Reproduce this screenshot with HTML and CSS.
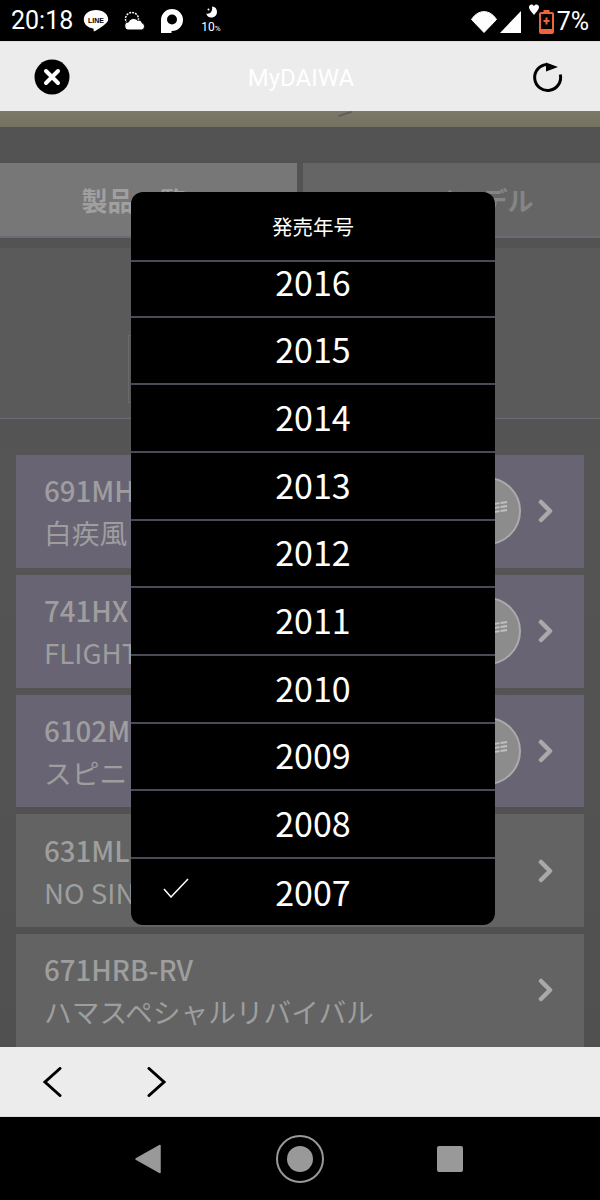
FILE: index.html
```html
<!DOCTYPE html>
<html lang="ja">
<head>
  <meta charset="UTF-8">
  <meta name="viewport" content="width=device-width, initial-scale=1.0">
  <title>MyDAIWA</title>
  <link rel="stylesheet" href="styles.css">
</head>
<body>
  <div class="screen">

    <!-- status bar -->
    <div class="status">
      <span class="clock">20:18</span>
      <svg class="st-line" width="26" height="24" viewBox="0 0 26 24">
        <path d="M13 1C6 1 .8 5 .8 10.400c0 4.800 4 8.200 9.200 9 .8.200.8 .8 .6 2-.1 1 .6 1.200 1.400.7 2.800-1.600 8-4.600 10.400-7.300C24.300 13 25.200 11.800 25.200 10.400 25.200 5 20 1 13 1z" fill="#fff"/>
        <text x="13" y="13.500" class="line-text">LINE</text>
      </svg>
      <svg class="st-weather" width="24" height="22" viewBox="0 0 24 22">
        <circle cx="9" cy="9" r="6.500" fill="none" stroke="#fff" stroke-width="1.500" stroke-dasharray="2 1"/>
        <path d="M6 20a4 4 0 0 1-.5-8c1-3.500 6.500-5 9-1.500 1-.6 4-.5 4.500 2.300A3.800 3.800 0 0 1 19 20z" fill="#fff" stroke="#000"/>
      </svg>
      <svg class="st-p" width="22" height="24" viewBox="0 0 22 24">
        <path fill-rule="evenodd" d="M0 24V11A11 11 0 1 1 11 22H10.500V24zM11 5.500a5 5 0 1 0 0 10 5 5 0 0 0 0-10z" fill="#fff"/>
      </svg>
      <div class="st-moon">
        <svg width="13" height="12" viewBox="0 0 13 12">
          <path d="M7 .5a5.500 5.500 0 1 1-5.800 7c3.300 1.200 6.800-1.500 5.800-7z" fill="#fff"/>
          <circle cx="3.500" cy="3.500" r="1" fill="#fff"/>
        </svg>
        <span>10<small>%</small></span>
      </div>
      <div class="st-right">
        <svg width="26" height="22" viewBox="0 0 26 22"><path d="M.5 8.500C7-2 19-2 25.500 8.500L13 21.500z" fill="#fff" stroke="#fff" stroke-linejoin="round"/></svg>
        <svg class="st-signal" width="21" height="22" viewBox="0 0 21 22"><path d="M21 0v22H0z" fill="#fff"/></svg>
        <svg class="st-heart" width="10" height="11" viewBox="0 0 10 11"><path d="M5 11C3 8 0 6 0 3c0-3 4-3.500 5-1 1-2.500 5-2 5 1 0 3-3 5-5 8z" fill="#fff"/></svg>
        <svg class="st-batt" width="15" height="24" viewBox="0 0 15 24">
          <rect x="4.500" y="0" width="6" height="3" fill="#f0643c"/>
          <rect x="1" y="3" width="13" height="20" rx="1" fill="none" stroke="#f0643c" stroke-width="2"/>
          <path d="M7.500 7.500v7M4.500 11h6" stroke="#f0643c" stroke-width="2"/>
          <rect x="2" y="19" width="11" height="3" fill="#f0643c"/>
        </svg>
        <span class="pct">7%</span>
      </div>
    </div>

    <!-- browser header -->
    <header class="topbar">
      <svg width="36" height="36" viewBox="0 0 36 36">
        <circle cx="18" cy="18" r="17.500" fill="#000"/>
        <path d="M12 12l12 12M24 12L12 24" stroke="#fff" stroke-width="4" stroke-linecap="round"/>
      </svg>
      <span class="topbar-title">MyDAIWA</span>
      <svg width="32" height="34" viewBox="0 0 32 34">
        <path d="M15 4.500A13 13 0 1 0 28.300 14.500" fill="none" stroke="#000" stroke-width="3"/>
        <path d="M14 2.500l12 4.500-12 4.500z" fill="#000"/>
      </svg>
    </header>

    <!-- page under the dialog -->
    <main class="page">
      <div class="hero"><i></i></div>
      <div class="tabs">
        <div class="tab tab-on">製品一覧</div>
        <div class="tab tab-off">マイモデル</div>
      </div>
      <section class="filter">
        <div class="filter-box"></div>
      </section>
      <ul class="cards">
        <li class="card card-own">
          <div class="card-text"><b>691MH</b><span>白疾風</span></div>
          <svg class="medal" width="68" height="68" viewBox="0 0 68 68">
            <circle cx="34" cy="34" r="33" />
            <path d="M8 32l46-7M8 36l46-7M8 40l46-7" />
          </svg>
          <svg class="chev" width="16" height="24" viewBox="0 0 16 24"><path d="M3 3l9 9-9 9" /></svg>
        </li>
        <li class="card card-own">
          <div class="card-text"><b>741HX</b><span>FLIGHT</span></div>
          <svg class="medal" width="68" height="68" viewBox="0 0 68 68">
            <circle cx="34" cy="34" r="33" />
            <path d="M8 32l46-7M8 36l46-7M8 40l46-7" />
          </svg>
          <svg class="chev" width="16" height="24" viewBox="0 0 16 24"><path d="M3 3l9 9-9 9" /></svg>
        </li>
        <li class="card card-own">
          <div class="card-text"><b>6102M</b><span>スピニ</span></div>
          <svg class="medal" width="68" height="68" viewBox="0 0 68 68">
            <circle cx="34" cy="34" r="33" />
            <path d="M8 32l46-7M8 36l46-7M8 40l46-7" />
          </svg>
          <svg class="chev" width="16" height="24" viewBox="0 0 16 24"><path d="M3 3l9 9-9 9" /></svg>
        </li>
        <li class="card">
          <div class="card-text"><b>631ML</b><span>NO SIN</span></div>
          <svg class="chev" width="16" height="24" viewBox="0 0 16 24"><path d="M3 3l9 9-9 9" /></svg>
        </li>
        <li class="card">
          <div class="card-text"><b>671HRB-RV</b><span>ハマスペシャルリバイバル</span></div>
          <svg class="chev" width="16" height="24" viewBox="0 0 16 24"><path d="M3 3l9 9-9 9" /></svg>
        </li>
      </ul>
    </main>

    <!-- browser back / forward -->
    <div class="bottombar">
      <svg width="22" height="30" viewBox="0 0 22 30"><path d="M18 1.500L3 15l15 13.500"/></svg>
      <svg width="22" height="30" viewBox="0 0 22 30"><path d="M3 1.500L18 15 3 28.500"/></svg>
    </div>

    <!-- android nav -->
    <nav class="sysnav">
      <svg width="26" height="30" viewBox="0 0 26 30"><path d="M25 1.500v27L1 15z" fill="#999" stroke="#999" stroke-linejoin="round" stroke-width="1.500"/></svg>
      <svg class="nav-home" width="50" height="50" viewBox="0 0 50 50">
        <circle cx="25" cy="25" r="23" fill="none" stroke="#999" stroke-width="2"/>
        <circle cx="25" cy="25" r="13" fill="#999"/>
      </svg>
      <div class="nav-square"></div>
    </nav>

    <!-- year picker -->
    <div class="picker">
      <div class="picker-head">発売年号</div>
      <div class="picker-row picker-cut">2016</div>
      <div class="picker-row">2015</div>
      <div class="picker-row">2014</div>
      <div class="picker-row">2013</div>
      <div class="picker-row">2012</div>
      <div class="picker-row">2011</div>
      <div class="picker-row">2010</div>
      <div class="picker-row">2009</div>
      <div class="picker-row">2008</div>
      <div class="picker-row picker-sel">
        <svg class="tick" width="26" height="20" viewBox="0 0 26 20"><path d="M1 11l7 8L25 1"/></svg>
        2007
      </div>
    </div>

  </div>
</body>
</html>
```

FILE: styles.css
```css
* {
  box-sizing: border-box;
}
body {
  margin: 0;
  background: #000;
  font-family: "Noto Sans CJK JP", "Noto Sans", sans-serif;
}
.screen {
  position: relative;
  width: 600px;
  height: 1200px;
  display: flex;
  flex-direction: column;
  overflow: hidden;
}

/* status bar */
.status {
  height: 42px;
  flex: none;
  background: #000;
  color: #fff;
  display: flex;
  align-items: center;
  padding: 0 11px;
  border-bottom: 1px solid #ddd;
  font-family: Roboto, sans-serif;
}
.clock {
  font-size: 25px;
  width: 72px;
}
.line-text {
  font: bold 7px "Liberation Sans", sans-serif;
  text-anchor: middle;
  fill: #000;
}
.st-weather {
  margin-left: 14px;
}
.st-p {
  margin-left: 14px;
  margin-top: 1px;
}
.st-moon {
  margin-left: 17px;
  width: 22px;
  display: flex;
  flex-direction: column;
  align-items: center;
  font-size: 12px;
  line-height: 12px;
}
.st-moon svg {
  margin-bottom: 3px;
}
.st-moon small {
  font-size: 8px;
}
.st-right {
  margin-left: auto;
  display: flex;
  align-items: center;
  position: relative;
  top: 1px;
}
.st-signal {
  margin-left: 3px;
}
.st-heart {
  margin: -24px 0 0 8px;
}
.pct {
  font-size: 25px;
  margin-left: 3px;
}

/* browser bars */
.topbar {
  height: 69px;
  flex: none;
  background: #ececec;
  display: flex;
  align-items: center;
  justify-content: space-between;
  padding: 0 36px 0 34px;
}
.topbar-title {
  color: #fff;
  font-family: Roboto, sans-serif;
  font-size: 24px;
  padding-top: 2px;
}
.bottombar {
  height: 70px;
  flex: none;
  background: #ececec;
  border-bottom: 1px solid #ddd;
  display: flex;
  align-items: center;
  gap: 82px;
  padding-left: 42px;
}
.bottombar path {
  fill: none;
  stroke: #000;
  stroke-width: 3;
  stroke-linecap: round;
}
.sysnav {
  height: 83px;
  flex: none;
  background: #000;
  display: flex;
  align-items: center;
  padding-left: 135px;
}
.nav-home {
  margin-left: 114px;
}
.nav-square {
  width: 26px;
  height: 26px;
  margin-left: 112px;
  border-radius: 2px;
  background: #999;
}

/* dimmed page */
.page {
  flex: 1;
  min-height: 0;
  background: linear-gradient(#525252, #555 40%, #505050);
  overflow: hidden;
}
.hero {
  height: 16px;
  background: linear-gradient(#7c7969, #757263);
}
.hero i {
  display: block;
  width: 14px;
  height: 2px;
  margin-left: 338px;
  background: #5e5e60;
  transform: translateY(2px) rotate(-18deg);
}
.tabs {
  display: flex;
  justify-content: space-between;
  margin-top: 36px;
  height: 75px;
}
.tab {
  width: 297px;
  display: flex;
  align-items: center;
  justify-content: center;
  font-size: 26px;
  font-weight: bold;
  border-bottom: 2px solid #6b6b73;
}
.tab-on {
  background: #777;
  color: #a0a0a0;
  padding-right: 30px;
}
.tab-off {
  background: #656565;
  color: #858585;
  padding-left: 34px;
}
.filter {
  height: 171px;
  margin-top: 10px;
  padding: 87px 0 0 128px;
  background: #5a5a5a;
  border-bottom: 1px solid #6c6c74;
}
.filter-box {
  width: 260px;
  height: 68px;
  border: 1px solid #6a6a6a;
}
.cards {
  list-style: none;
  margin: 36px 16px 0;
  padding: 0;
  display: flex;
  flex-direction: column;
  gap: 7px;
}
.card {
  height: 112.750px;
  flex: none;
  background: #636363;
  display: flex;
  align-items: center;
  padding: 0 30px 0 28px;
}
.card-own {
  background: #686474;
}
.card-text {
  flex: 1;
  display: flex;
  flex-direction: column;
  font-size: 27.700px;
  line-height: 42px;
  color: #9e9e9e;
}
.card-text b {
  font-weight: 500;
}
.chev path {
  fill: none;
  stroke: #a9a9a9;
  stroke-width: 4.500;
  stroke-linecap: round;
  stroke-linejoin: round;
}
.medal {
  margin-right: 17px;
}
.medal circle {
  fill: #8c8c8c;
  stroke: #aaa;
  stroke-width: 2;
}
.medal path {
  fill: none;
  stroke: #c0c0c0;
  stroke-width: 2;
  stroke-dasharray: 7 1;
}

/* year picker */
.picker {
  position: absolute;
  left: 131px;
  top: 192px;
  width: 364px;
  height: 733px;
  background: #000;
  border-radius: 12px;
  overflow: hidden;
  color: #fff;
}
.picker-head {
  height: 69.500px;
  display: flex;
  align-items: center;
  justify-content: center;
  font-size: 20.500px;
  border-bottom: 2px solid #4a4a58;
}
.picker-row {
  position: relative;
  height: 67.700px;
  padding-bottom: 3px;
  display: flex;
  align-items: center;
  justify-content: center;
  font-size: 34px;
  border-bottom: 2px solid #4a4a58;
}
.picker-cut {
  height: 56px;
  padding-bottom: 0;
  align-items: flex-start;
  line-height: 40px;
}
.picker-sel {
  border-bottom: 0;
}
.tick {
  position: absolute;
  left: 32px;
  top: 19px;
}
.tick path {
  fill: none;
  stroke: #fff;
  stroke-width: 1.500;
}
```
